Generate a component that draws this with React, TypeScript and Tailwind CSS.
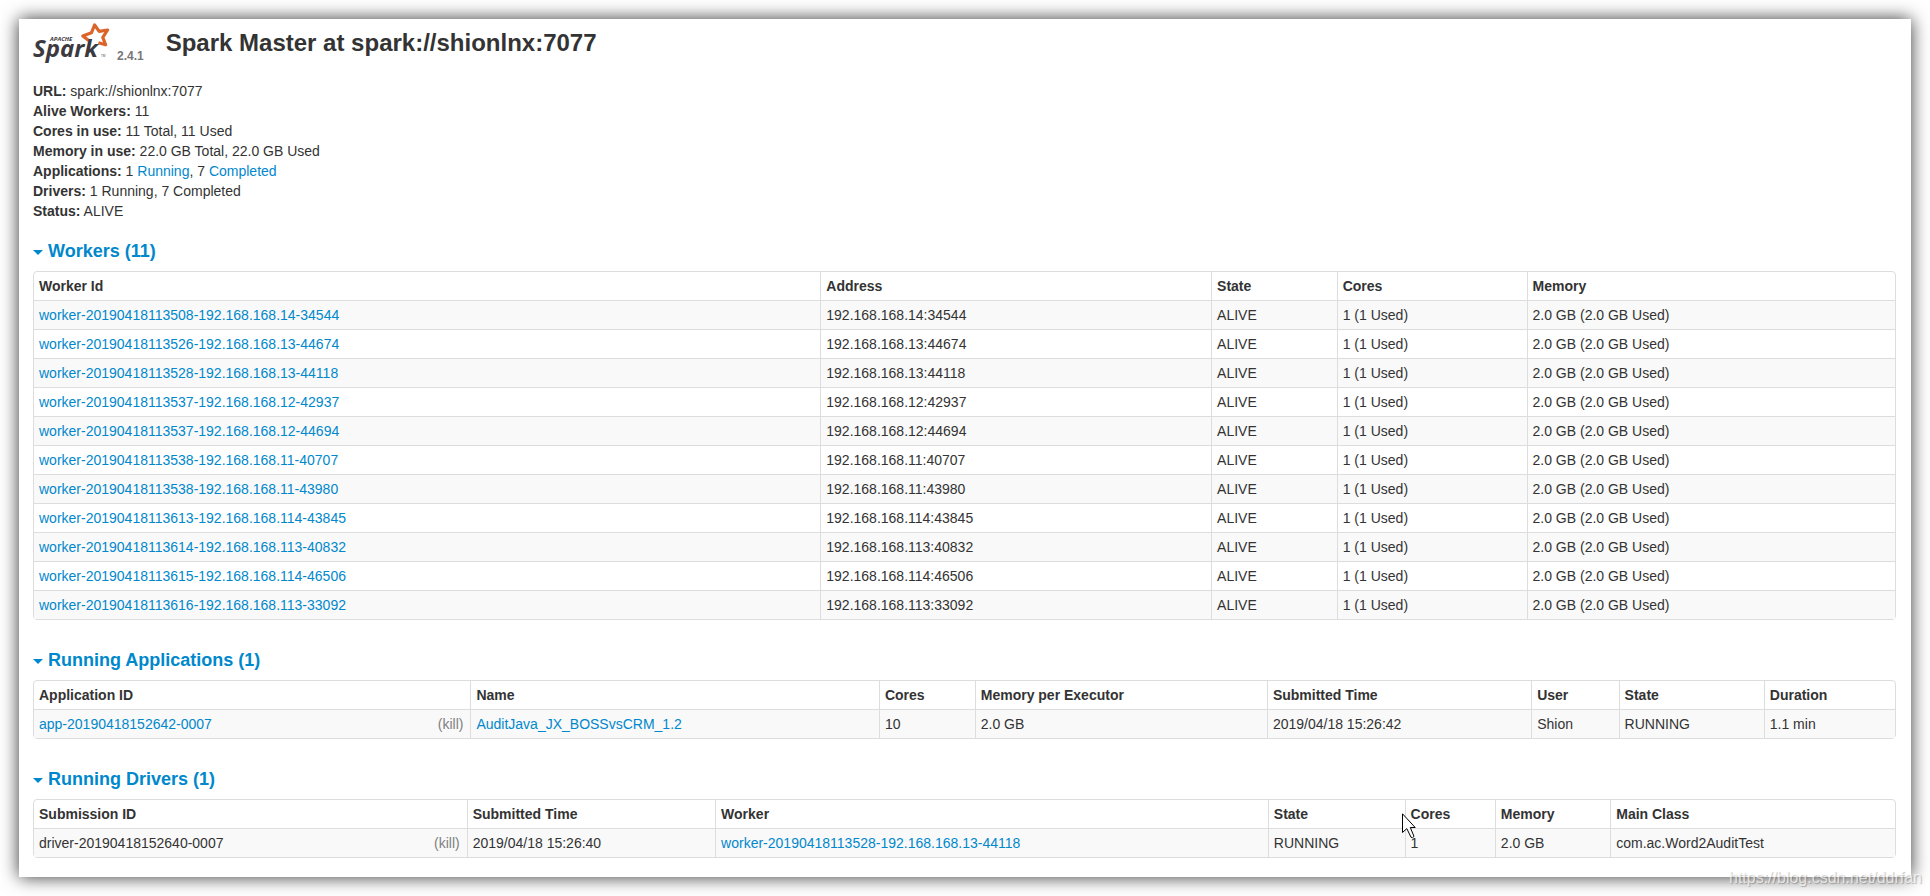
import { useState, type ReactNode } from 'react'

const workers = [
  { id: 'worker-20190418113508-192.168.168.14-34544', address: '192.168.168.14:34544' },
  { id: 'worker-20190418113526-192.168.168.13-44674', address: '192.168.168.13:44674' },
  { id: 'worker-20190418113528-192.168.168.13-44118', address: '192.168.168.13:44118' },
  { id: 'worker-20190418113537-192.168.168.12-42937', address: '192.168.168.12:42937' },
  { id: 'worker-20190418113537-192.168.168.12-44694', address: '192.168.168.12:44694' },
  { id: 'worker-20190418113538-192.168.168.11-40707', address: '192.168.168.11:40707' },
  { id: 'worker-20190418113538-192.168.168.11-43980', address: '192.168.168.11:43980' },
  { id: 'worker-20190418113613-192.168.168.114-43845', address: '192.168.168.114:43845' },
  { id: 'worker-20190418113614-192.168.168.113-40832', address: '192.168.168.113:40832' },
  { id: 'worker-20190418113615-192.168.168.114-46506', address: '192.168.168.114:46506' },
  { id: 'worker-20190418113616-192.168.168.113-33092', address: '192.168.168.113:33092' },
]

type Column = { name: string; width: string }

const workerColumns: Column[] = [
  { name: 'Worker Id', width: 'w-[42.25%]' },
  { name: 'Address', width: 'w-[21%]' },
  { name: 'State', width: 'w-[6.75%]' },
  { name: 'Cores', width: 'w-[10.2%]' },
  { name: 'Memory', width: 'w-[19.8%]' },
]

const appColumns: Column[] = [
  { name: 'Application ID', width: 'w-[23.45%]' },
  { name: 'Name', width: 'w-[21.95%]' },
  { name: 'Cores', width: 'w-[5.15%]' },
  { name: 'Memory per Executor', width: 'w-[15.7%]' },
  { name: 'Submitted Time', width: 'w-[14.2%]' },
  { name: 'User', width: 'w-[4.7%]' },
  { name: 'State', width: 'w-[7.8%]' },
  { name: 'Duration', width: 'w-[7.05%]' },
]

const driverColumns: Column[] = [
  { name: 'Submission ID', width: 'w-[23.25%]' },
  { name: 'Submitted Time', width: 'w-[13.35%]' },
  { name: 'Worker', width: 'w-[29.7%]' },
  { name: 'State', width: 'w-[7.35%]' },
  { name: 'Cores', width: 'w-[4.85%]' },
  { name: 'Memory', width: 'w-[6.2%]' },
  { name: 'Main Class', width: 'w-[15.3%]' },
]

const SparkLogo = () => (
  <svg viewBox="0 0 80 44" className="h-11 w-20" role="img" aria-label="Apache Spark">
    <path
      d="M57 20.6 L49.8 15 L58.4 11.8 L61.6 4 L66.2 10.4 L74.6 9 L69.8 16.4 L72.6 23.8 L65.4 21.8"
      fill="none"
      stroke="#dc6428"
      strokeWidth="3.2"
      strokeLinejoin="round"
    />
    <text x="17" y="20" fontSize="6" fontWeight="700" fontStyle="italic" fill="#3c3a3e" fontFamily="'Open Sans', sans-serif">
      APACHE
    </text>
    <text x="0" y="36" fontSize="24" fontWeight="700" fontStyle="italic" fill="#3c3a3e" fontFamily="'Open Sans', sans-serif">
      Spark
    </text>
    <text x="68" y="36" fontSize="3" fill="#3c3a3e" fontFamily="'Open Sans', sans-serif">
      TM
    </text>
  </svg>
)

const Link = ({ children }: { children: ReactNode }) => (
  <a href="#" className="text-[#0088cc] hover:underline">
    {children}
  </a>
)

const KillLink = () => (
  <a href="#" className="float-right mr-0.5 text-[#808080]">
    (kill)
  </a>
)

const Info = ({ label, children }: { label: string; children: ReactNode }) => (
  <li>
    <strong>{label}:</strong> {children}
  </li>
)

type SectionProps = {
  title: string
  columns: Column[]
  rows: ReactNode[][]
}

const Section = ({ title, columns, rows }: SectionProps) => {
  const [open, setOpen] = useState(true)
  return (
    <section>
      <h4 className="mb-2.5 text-[18px] leading-5 font-bold text-[#0088cc]">
        <button
          type="button"
          aria-expanded={open}
          onClick={() => setOpen(!open)}
          className="flex cursor-pointer items-center gap-[5px]"
        >
          <svg viewBox="0 0 10 5" className="mt-0.5 h-[5px] w-2.5" aria-hidden="true">
            <path d="M0 0h10l-5 5z" fill="currentColor" />
          </svg>
          {title}
        </button>
      </h4>
      {open && (
        <table className="w-full table-fixed border-separate border-spacing-0 rounded border border-[#dddddd]">
          <thead>
            <tr>
              {columns.map(({ name, width }) => (
                <th
                  key={name}
                  className={`${width} border-l border-[#dddddd] px-[5px] py-1 text-left font-bold first:border-l-0`}
                >
                  {name}
                </th>
              ))}
            </tr>
          </thead>
          <tbody>
            {rows.map((row, i) => (
              <tr key={i} className="odd:bg-[#f9f9f9]">
                {row.map((cell, j) => (
                  <td key={j} className="border-t border-l border-[#dddddd] px-[5px] py-1 first:border-l-0">
                    {cell}
                  </td>
                ))}
              </tr>
            ))}
          </tbody>
        </table>
      )}
    </section>
  )
}

const Cursor = () => (
  <svg viewBox="0 0 14 26" className="pointer-events-none absolute top-[813px] left-[1402px] h-[26px] w-3.5" aria-hidden="true">
    <path
      d="M.5 .8 V19.5 L4.8 15.6 L9 24.2 Q10.5 25.6 12 23.4 L8.3 14.5 H13.2 Z"
      fill="#ffffff"
      stroke="#000000"
      strokeWidth="1"
    />
  </svg>
)

export default function App() {
  return (
    <div className="relative overflow-hidden bg-white p-[19px] font-['Liberation_Sans',Arial,sans-serif] text-[14px] leading-5 text-[#333333]">
      <main className="bg-white pr-[15px] pb-[19px] pl-3.5 shadow-[0_0_17px_rgba(0,0,0,0.8)]">
        <header className="flex h-[62px] items-start">
          <a href="#" className="flex items-start">
            <span className="pt-0.5">
              <SparkLogo />
            </span>
            <span className="ml-1 pt-[27px] text-[12px] font-bold text-[#777777]">2.4.1</span>
          </a>
          <h3 className="ml-[22px] pt-1 text-[24px] leading-10 font-bold">Spark Master at spark://shionlnx:7077</h3>
        </header>

        <ul>
          <Info label="URL">spark://shionlnx:7077</Info>
          <Info label="Alive Workers">11</Info>
          <Info label="Cores in use">11 Total, 11 Used</Info>
          <Info label="Memory in use">22.0 GB Total, 22.0 GB Used</Info>
          <Info label="Applications">
            1 <Link>Running</Link>, 7 <Link>Completed</Link>
          </Info>
          <Info label="Drivers">1 Running, 7 Completed</Info>
          <Info label="Status">ALIVE</Info>
        </ul>

        <div className="mt-5 flex flex-col gap-[30px]">
          <Section
            title="Workers (11)"
            columns={workerColumns}
            rows={workers.map((worker) => [
              <Link>{worker.id}</Link>,
              worker.address,
              'ALIVE',
              '1 (1 Used)',
              '2.0 GB (2.0 GB Used)',
            ])}
          />
          <Section
            title="Running Applications (1)"
            columns={appColumns}
            rows={[
              [
                <>
                  <Link>app-20190418152642-0007</Link> <KillLink />
                </>,
                <Link>AuditJava_JX_BOSSvsCRM_1.2</Link>,
                '10',
                '2.0 GB',
                '2019/04/18 15:26:42',
                'Shion',
                'RUNNING',
                '1.1 min',
              ],
            ]}
          />
          <Section
            title="Running Drivers (1)"
            columns={driverColumns}
            rows={[
              [
                <>
                  driver-20190418152640-0007 <KillLink />
                </>,
                '2019/04/18 15:26:40',
                <Link>worker-20190418113528-192.168.168.13-44118</Link>,
                'RUNNING',
                '1',
                '2.0 GB',
                'com.ac.Word2AuditTest',
              ],
            ]}
          />
        </div>
      </main>
      <Cursor />
      <span className="absolute right-2 bottom-2 text-[16px] text-white/70 [text-shadow:1px_1px_1px_rgba(0,0,0,0.25)]">
        https://blog.csdn.net/ddrfan
      </span>
    </div>
  )
}
